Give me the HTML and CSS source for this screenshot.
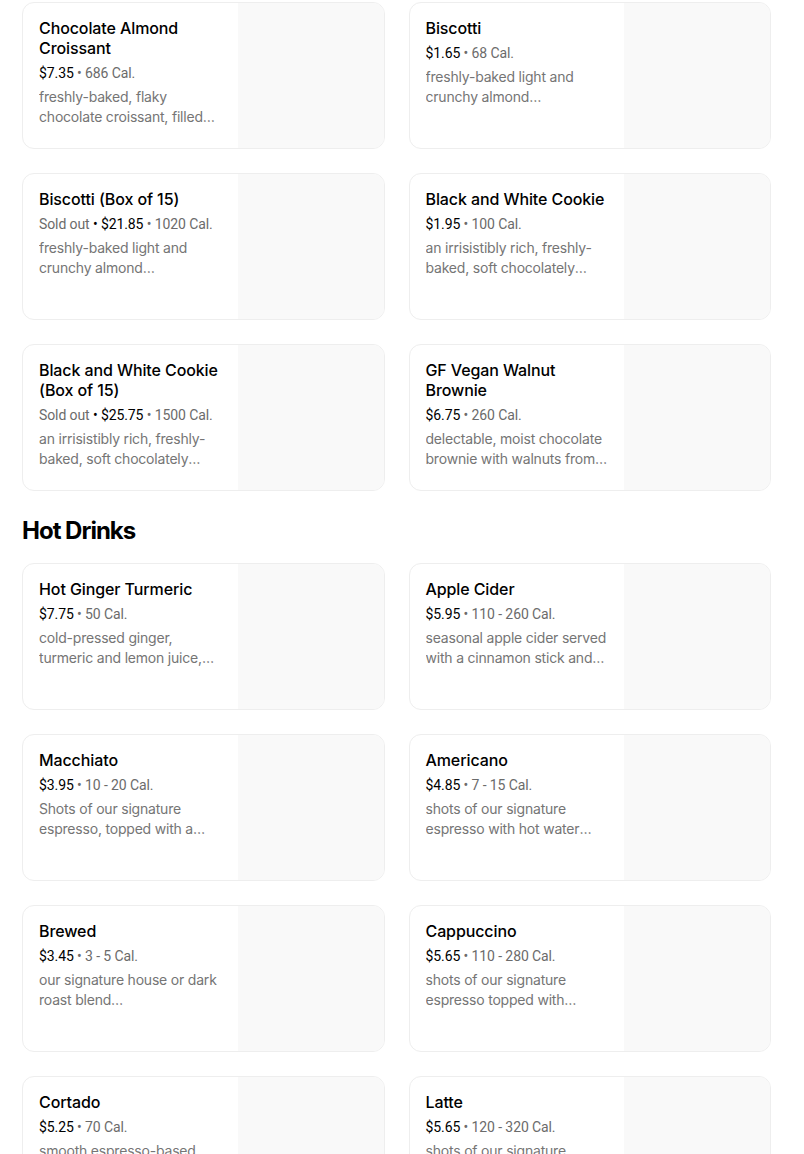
FILE: index.html
```html
<!DOCTYPE html>
<html>
<head>
<meta charset="utf-8">
<link rel="stylesheet" href="styles.css">
</head>
<body>
<main class="menu">
  <section class="grid">
    <div class="card"><div class="info"><div class="title">Chocolate Almond Croissant</div><div class="meta"><span class="price">$7.35</span> • 686 Cal.</div><div class="desc">freshly-baked, flaky chocolate croissant, filled with almond cream and topped with sliced almonds</div></div><div class="thumb"></div></div>
    <div class="card"><div class="info"><div class="title">Biscotti</div><div class="meta"><span class="price">$1.65</span> • 68 Cal.</div><div class="desc">freshly-baked light and crunchy almond traditionally-made biscotti</div></div><div class="thumb"></div></div>
    <div class="card"><div class="info"><div class="title">Biscotti (Box of 15)</div><div class="meta">Sold out <span class="price">• $21.85</span> • 1020 Cal.</div><div class="desc">freshly-baked light and crunchy almond traditionally-made biscotti</div></div><div class="thumb"></div></div>
    <div class="card"><div class="info"><div class="title">Black and White Cookie</div><div class="meta"><span class="price">$1.95</span> • 100 Cal.</div><div class="desc">an irrisistibly rich, freshly-baked, soft chocolately cookie with white chocolate chips</div></div><div class="thumb"></div></div>
    <div class="card"><div class="info"><div class="title">Black and White Cookie (Box of 15)</div><div class="meta">Sold out <span class="price">• $25.75</span> • 1500 Cal.</div><div class="desc">an irrisistibly rich, freshly-baked, soft chocolately cookie with white chocolate chips</div></div><div class="thumb"></div></div>
    <div class="card"><div class="info"><div class="title">GF Vegan Walnut Brownie</div><div class="meta"><span class="price">$6.75</span> • 260 Cal.</div><div class="desc">delectable, moist chocolate brownie with walnuts from our friends</div></div><div class="thumb"></div></div>
  </section>
  <h2 class="section-title">Hot Drinks</h2>
  <section class="grid">
    <div class="card"><div class="info"><div class="title">Hot Ginger Turmeric</div><div class="meta"><span class="price">$7.75</span> • 50 Cal.</div><div class="desc">cold-pressed ginger, turmeric and lemon juice, served hot with honey</div></div><div class="thumb"></div></div>
    <div class="card"><div class="info"><div class="title">Apple Cider</div><div class="meta"><span class="price">$5.95</span> • 110 - 260 Cal.</div><div class="desc">seasonal apple cider served with a cinnamon stick and orange slice</div></div><div class="thumb"></div></div>
    <div class="card"><div class="info"><div class="title">Macchiato</div><div class="meta"><span class="price">$3.95</span> • 10 - 20 Cal.</div><div class="desc">Shots of our signature espresso, topped with a dollop of foamed milk</div></div><div class="thumb"></div></div>
    <div class="card"><div class="info"><div class="title">Americano</div><div class="meta"><span class="price">$4.85</span> • 7 - 15 Cal.</div><div class="desc">shots of our signature espresso with hot water added</div></div><div class="thumb"></div></div>
    <div class="card"><div class="info"><div class="title">Brewed</div><div class="meta"><span class="price">$3.45</span> • 3 - 5 Cal.</div><div class="desc">our signature house or dark roast blend available&nbsp;in&nbsp;regular&nbsp;or decaf</div></div><div class="thumb"></div></div>
    <div class="card"><div class="info"><div class="title">Cappuccino</div><div class="meta"><span class="price">$5.65</span> • 110 - 280 Cal.</div><div class="desc">shots of our signature espresso topped with steamed milk and foam</div></div><div class="thumb"></div></div>
    <div class="card"><div class="info"><div class="title">Cortado</div><div class="meta"><span class="price">$5.25</span> • 70 Cal.</div><div class="desc">smooth espresso-based drink with equal parts steamed milk</div></div><div class="thumb"></div></div>
    <div class="card"><div class="info"><div class="title">Latte</div><div class="meta"><span class="price">$5.65</span> • 120 - 320 Cal.</div><div class="desc">shots of our signature espresso with steamed milk and a thin layer of foam</div></div><div class="thumb"></div></div>
  </section>
</main>
</body>
</html>
```

FILE: styles.css
```css
html, body {
  margin: 0;
  padding: 0;
  background: #ffffff;
}
body {
  font-family: Inter, "Noto Sans", sans-serif;
  color: #000000;
}
.menu {
  width: 749px;
  margin-left: 22px;
  padding-top: 2px;
}
.grid {
  display: grid;
  grid-template-columns: 1fr 1fr;
  gap: 24px;
}
.card {
  display: flex;
  height: 147px;
  box-sizing: border-box;
  border: 1px solid #eeeeee;
  border-radius: 12px;
  overflow: hidden;
  background: #ffffff;
}
.info {
  flex: 1;
  min-width: 0;
  padding: 15px 16px 16px 16px;
  display: flex;
  flex-direction: column;
  gap: 4px;
}
.thumb {
  width: 146px;
  flex-shrink: 0;
  background: #f9f9f9;
}
.title {
  font-size: 16px;
  line-height: 20px;
  font-weight: 500;
  letter-spacing: -0.1px;
  color: #000000;
  margin-bottom: 1px;
}
.meta {
  font-family: Roboto, "Liberation Sans", sans-serif;
  font-size: 14px;
  line-height: 20px;
  color: #6b6b6b;
  letter-spacing: -0.1px;
  white-space: nowrap;
}
.price {
  color: #000000;
}
.desc {
  font-size: 14px;
  line-height: 20px;
  color: #757575;
  letter-spacing: -0.2px;
  display: -webkit-box;
  -webkit-line-clamp: 2;
  -webkit-box-orient: vertical;
  overflow: hidden;
}
.section-title {
  font-size: 24px;
  line-height: 32px;
  font-weight: 700;
  letter-spacing: -1px;
  margin: 24px 0 16px 0;
}
```
